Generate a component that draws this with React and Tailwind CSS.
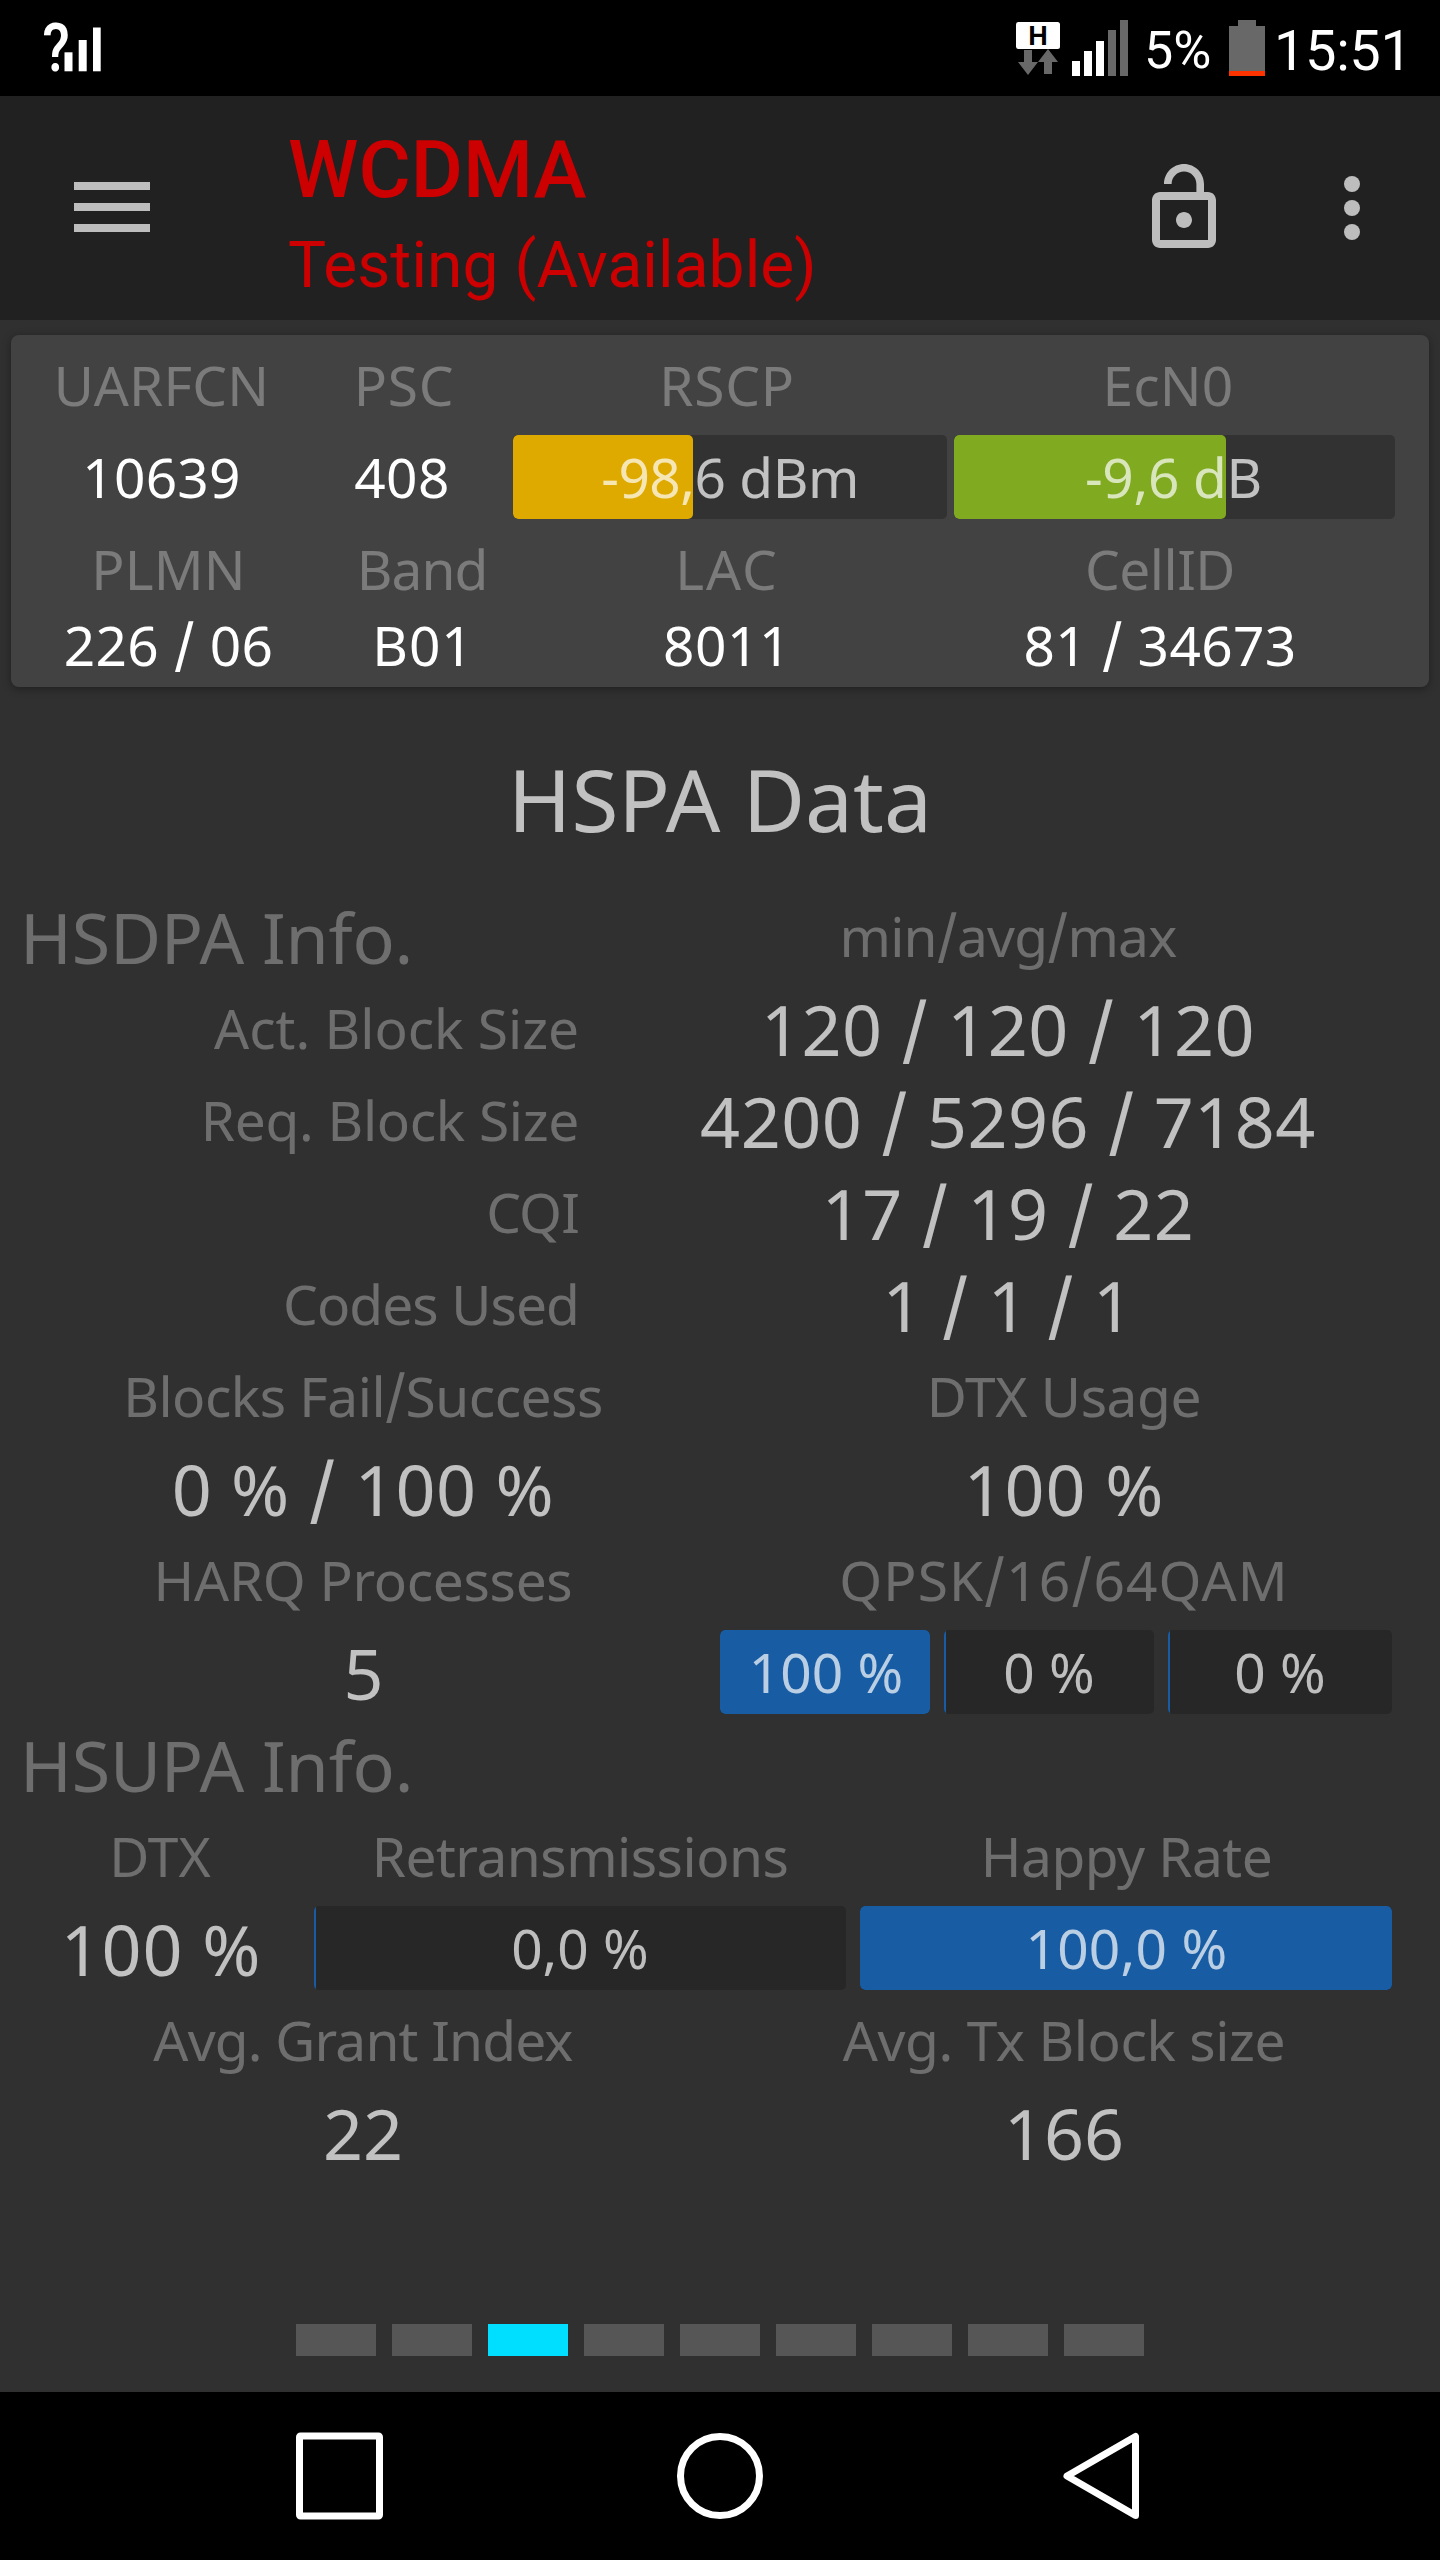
import React from 'react';
import clsx from 'clsx';

// Inter's slash is taller and drops below the baseline
const slashed = (text) =>
  text.split('/').map((part, i) => (
    <React.Fragment key={i}>
      {i > 0 && <span className="font-['Inter'] text-[1.06em] leading-[0]">/</span>}
      {part}
    </React.Fragment>
  ));

const Meter = ({ text, value, color = 'bg-[#185ca4]', track = 'bg-[#272727]', className }) => (
  <div className={clsx('relative h-[84px] overflow-hidden rounded-[5px] text-center leading-[84px]', track, className)}>
    <div
      className={clsx('absolute inset-y-0 left-0 min-w-0.5', value > 0 && 'rounded-[5px]', color)}
      style={{ width: `${value}%` }}
    />
    <span className="relative text-white/70">{text}</span>
  </div>
);

const Label = ({ children, className }) => (
  <div className={clsx('h-[92px] text-white/30', className)}>{slashed(children)}</div>
);

const Value = ({ children, className }) => (
  <div className={clsx('h-[92px] text-[70px] leading-[94px] text-white/70', className)}>{slashed(children)}</div>
);

const StatusBar = () => (
  <div className="flex h-24 items-center bg-black font-['Roboto'] text-white">
    {/* unknown signal */}
    <svg className="ml-8 h-24 w-[72px] shrink-0" viewBox="32 0 72 96" fill="#fff">
      <text transform="translate(42.3 71) scale(.86 1)" fontFamily="Roboto" fontWeight="500" fontSize="66">?</text>
      <rect x="64.5" y="52.3" width="8" height="19" />
      <rect x="78.7" y="40" width="8" height="31.3" />
      <rect x="93" y="27.5" width="7.7" height="43.8" />
    </svg>

    {/* network type + signal */}
    <svg className="ml-auto h-24 w-28 shrink-0" viewBox="1016 0 112 96">
      <rect x="1016" y="22" width="44" height="27" rx="2.5" fill="#fff" />
      <text x="1038" y="45" textAnchor="middle" fontFamily="Liberation Sans" fontWeight="700" fontSize="27" fill="#000">H</text>
      <path d="M1024 50h8v12h6l-10 13-10-13h6z" fill="#686868" />
      <path d="M1048 49l10 13h-6v12h-8V62h-6z" fill="#686868" />
      <path d="M1072 61h8v15h-8zM1084 51h8v25h-8zM1096 41h8v35h-8z" fill="#fff" />
      <path d="M1108 30h8v46h-8zM1120 20h8v56h-8z" fill="#686868" />
    </svg>

    <span className="mt-[5px] ml-4 w-[85px] text-[52px] leading-none">5%</span>

    <svg className="h-24 w-9 shrink-0" viewBox="0 0 36 96">
      <path d="M9 20h18v6h9v45H0V26h9z" fill="#686868" />
      <path d="M0 71h36v5H0z" fill="#ff3300" />
    </svg>

    <span className="mt-1.5 ml-[9px] w-[166px] text-[56px] leading-none tracking-[-0.4px]">15:51</span>
  </div>
);

const AppBar = () => (
  <div className="flex h-56 bg-[#212121] font-['Roboto'] text-[#cc0000]">
    <div className="mt-[86px] ml-[74px] flex w-[76px] flex-col gap-[13px]">
      <div className="h-2 bg-[#bdbdbd]" />
      <div className="h-2 bg-[#bdbdbd]" />
      <div className="h-2 bg-[#bdbdbd]" />
    </div>
    <div className="ml-[138px] pt-[34px] whitespace-nowrap">
      <div className="text-[80px] leading-[80px] font-medium">WCDMA</div>
      <div className="mt-4 text-[64px] leading-[80px] tracking-[0.1px]">Testing (Available)</div>
    </div>
    <svg className="mt-16 ml-auto size-24" viewBox="0 0 24 24" fill="#bdbdbd">
      <path d="M12 17c1.1 0 2-.9 2-2s-.9-2-2-2-2 .9-2 2 .9 2 2 2zm6-9h-1V6c0-2.76-2.24-5-5-5S7 3.24 7 6h1.9c0-1.71 1.39-3.1 3.1-3.1 1.71 0 3.1 1.39 3.1 3.1v2H6c-1.1 0-2 .9-2 2v10c0 1.1.9 2 2 2h12c1.1 0 2-.9 2-2V10c0-1.1-.9-2-2-2zm0 12H6V10h12v10z" />
    </svg>
    <svg className="mt-16 mr-10 ml-[72px] size-24" viewBox="0 0 24 24" fill="#bdbdbd">
      <circle cx="12" cy="6" r="2" />
      <circle cx="12" cy="12" r="2" />
      <circle cx="12" cy="18" r="2" />
    </svg>
  </div>
);

const CellCard = () => (
  <div className="mx-[11px] mt-[15px] h-[352px] rounded-lg bg-[#424242] pt-1 text-center text-white shadow-[0_2px_8px_rgba(0,0,0,0.35)]">
    <div className="grid h-[92px] grid-cols-[301px_182px_466px_416px]">
      <Label className="tracking-[0.2px]">UARFCN</Label>
      <Label className="pl-0.5 tracking-[0.8px]">PSC</Label>
      <Label className="tracking-[0.8px]">RSCP</Label>
      <Label className="tracking-[0.2px]">EcN0</Label>
    </div>
    <div className="flex h-[92px] items-center">
      <div className="w-[301px] tracking-[0.2px]">10639</div>
      <div className="w-[178px] pl-0.5 tracking-[0.4px]">408</div>
      <Meter className="ml-[23px] w-[434px] tracking-[-0.5px]" text="-98,6 dBm" value={41.4} color="bg-[#deaa00]" track="bg-[#323232]" />
      <Meter className="ml-[7px] w-[441px] pr-0.5 tracking-[-0.3px]" text="-9,6 dB" value={61.7} color="bg-[#80aa20]" track="bg-[#323232]" />
    </div>
    <div className="grid h-[92px] grid-cols-[315px_192px_418px_448px]">
      <Label className="tracking-[0.2px]">PLMN</Label>
      <Label className="tracking-[-1px]">Band</Label>
      <Label className="tracking-[2px]">LAC</Label>
      <Label className="tracking-[-0.5px]">CellID</Label>
    </div>
    <div className="grid h-[60px] grid-cols-[315px_192px_418px_448px] leading-[60px]">
      <div className="tracking-[0.3px]">{slashed('226 / 06')}</div>
      <div className="pl-0.5 tracking-[1px]">B01</div>
      <div className="tracking-[0.5px]">8011</div>
      <div className="tracking-[0.3px]">{slashed('81 / 34673')}</div>
    </div>
  </div>
);

const dlRows = [
  { label: 'Act. Block Size', value: '120 / 120 / 120', tracking: 'tracking-[0px]' },
  { label: 'Req. Block Size', value: '4200 / 5296 / 7184', tracking: 'tracking-[-0.3px]' },
  { label: 'CQI', value: '17 / 19 / 22', tracking: 'tracking-[-0.8px]' },
  { label: 'Codes Used', value: '1 / 1 / 1', tracking: 'tracking-[-0.9px]' },
];

const HspaData = () => (
  <div className="mt-[21px]">
    <h1 className="text-center text-[85.5px] leading-[182px] text-white/70">HSPA Data</h1>

    {/* HSDPA */}
    <div className="grid grid-cols-[581px_854px]">
      <Label className="pl-5 text-[70px] leading-[94px] tracking-[-0.2px]">HSDPA Info.</Label>
      <Label className="text-center tracking-[-0.8px]">min/avg/max</Label>
      {dlRows.map((row) => (
        <React.Fragment key={row.label}>
          <Label className={clsx('pr-0.5 text-right', row.tracking)}>{row.label}</Label>
          <Value className="text-center tracking-[0.5px]">{row.value}</Value>
        </React.Fragment>
      ))}
    </div>
    <div className="grid grid-cols-[714px_688px] pl-1.5 text-center">
      <Label className="tracking-[-0.5px]">Blocks Fail/Success</Label>
      <Label className="tracking-[-0.4px]">DTX Usage</Label>
      <Value className="tracking-[0.6px]">0 % / 100 %</Value>
      <Value className="tracking-[0.8px]">100 %</Value>
      <Label className="tracking-[-0.3px]">HARQ Processes</Label>
      <Label className="tracking-[1.1px]">QPSK/16/64QAM</Label>
      <Value className="pl-px">5</Value>
      <div className="-mr-6 flex items-center gap-3.5 pr-[40px]">
        <Meter className="w-[210px] shrink-0 pl-0.5" text="100 %" value={100} />
        <Meter className="w-[210px] shrink-0" text="0 %" value={0} />
        <Meter className="w-[224px] shrink-0" text="0 %" value={0} />
      </div>
    </div>

    {/* HSUPA */}
    <Label className="pl-5 text-[70px] leading-[94px] tracking-[-0.2px]">HSUPA Info.</Label>
    <div className="grid grid-cols-[290px_532px_532px] items-center gap-x-3.5 pl-2.5 text-center">
      <Label className="pl-2.5">DTX</Label>
      <Label className="tracking-[-0.5px]">Retransmissions</Label>
      <Label className="pl-px tracking-[-0.5px]">Happy Rate</Label>
      <Value className="pl-3 tracking-[0.8px]">100 %</Value>
      <Meter text="0,0 %" value={0} />
      <Meter className="pl-px tracking-[0.2px]" text="100,0 %" value={100} />
    </div>
    <div className="grid grid-cols-[714px_688px] pl-1.5 text-center">
      <Label className="tracking-[-0.8px]">Avg. Grant Index</Label>
      <Label className="tracking-[-0.4px]">Avg. Tx Block size</Label>
      <Value>22</Value>
      <Value>166</Value>
    </div>
  </div>
);

const Pager = ({ count, active }) => (
  <div className="mt-auto mb-9 flex justify-center gap-4">
    {Array.from({ length: count }, (_, i) => (
      <div key={i} className={clsx('h-8 w-20', i === active ? 'bg-[#00dfff]' : 'bg-[#565656]')} />
    ))}
  </div>
);

const NavBar = () => (
  <div className="flex h-[168px] items-center bg-black pl-[294px]">
    <svg className="size-[90px]" viewBox="0 0 90 90" fill="none" stroke="#fff" strokeWidth="7">
      <rect x="5.5" y="5" width="80" height="80" rx="1" />
    </svg>
    <svg className="ml-[291px] size-[90px]" viewBox="0 0 90 90" fill="none" stroke="#fff" strokeWidth="7">
      <circle cx="45" cy="45" r="39.5" />
    </svg>
    <svg className="ml-[297px] h-[90px] w-20" viewBox="0 0 80 90" fill="none" stroke="#fff" strokeWidth="7" strokeLinejoin="round">
      <path d="M73.5 5.5v79L5 45z" />
    </svg>
  </div>
);

const App = () => {
  return (
    <div className="flex h-[2560px] w-[1440px] flex-col overflow-hidden bg-[#303030]">
      <StatusBar />
      <AppBar />
      <div className="flex flex-1 flex-col font-['Noto_Sans',sans-serif] text-[55px] leading-[92px] whitespace-nowrap">
        <CellCard />
        <HspaData />
        <Pager count={9} active={2} />
      </div>
      <NavBar />
    </div>
  );
};

export default App;
